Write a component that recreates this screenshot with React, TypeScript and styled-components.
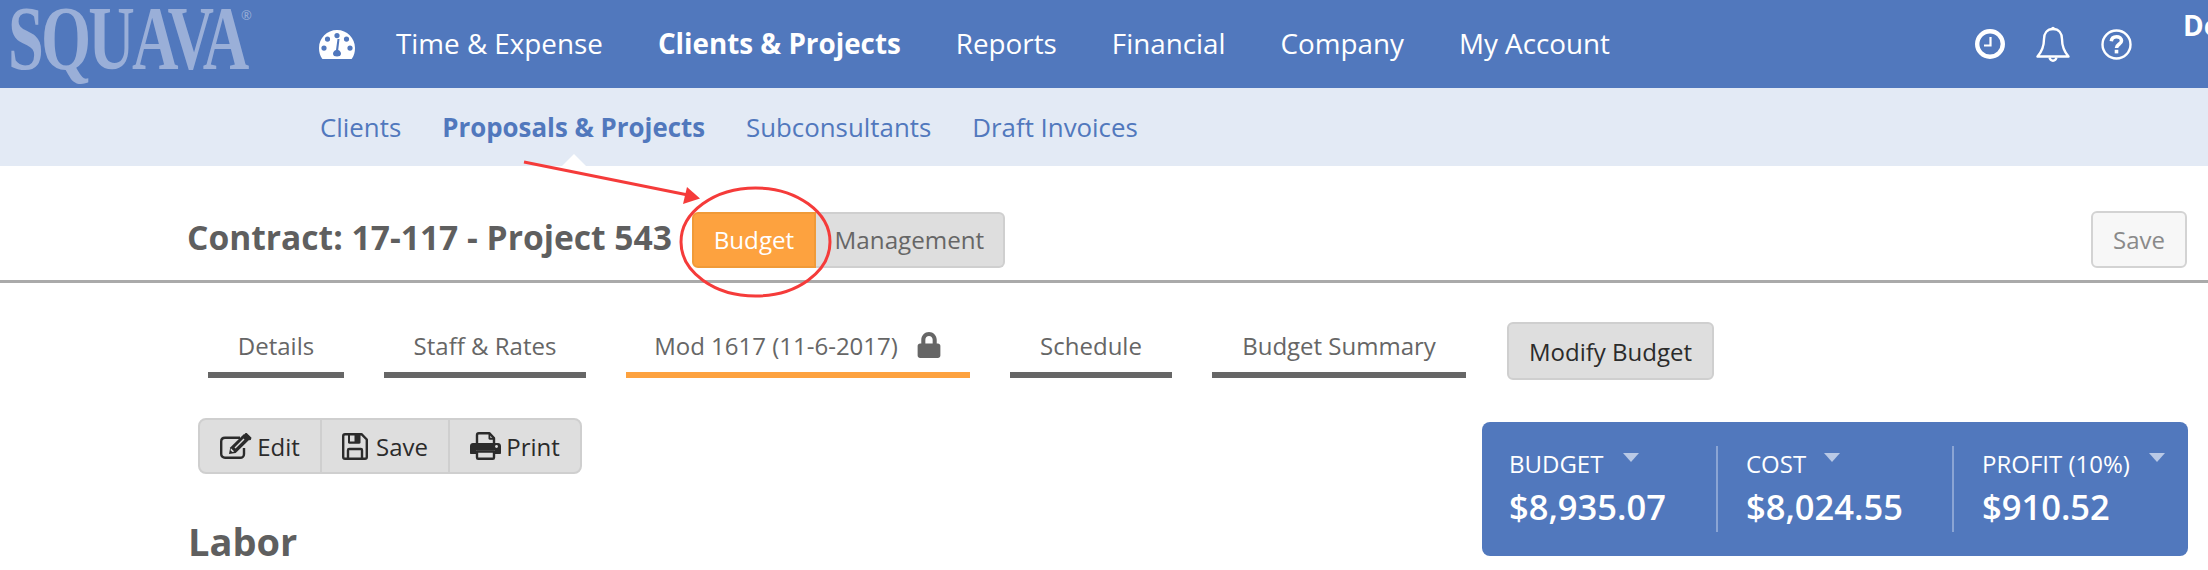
import React from 'react';
import styled, { createGlobalStyle } from 'styled-components';
import { FaLock } from 'react-icons/fa';

const GlobalStyle = createGlobalStyle`
  html, body {
    margin: 0;
    padding: 0;
    background: #fff;
    overflow: hidden;
  }
  body {
    font-family: "Open Sans", "Liberation Sans", sans-serif;
  }
  * {
    box-sizing: border-box;
  }
`;

const mainLinks = [
  { label: 'Time & Expense' },
  { label: 'Clients & Projects', active: true },
  { label: 'Reports' },
  { label: 'Financial' },
  { label: 'Company' },
  { label: 'My Account' },
];

const subLinks = [
  { label: 'Clients' },
  { label: 'Proposals & Projects', active: true },
  { label: 'Subconsultants' },
  { label: 'Draft Invoices' },
];

const tabs = [
  { label: 'Details', width: 136, gap: 40 },
  { label: 'Staff & Rates', width: 202, gap: 40 },
  { label: 'Mod 1617 (11-6-2017)', width: 344, gap: 40, active: true, locked: true },
  { label: 'Schedule', width: 162, gap: 40 },
  { label: 'Budget Summary', width: 254, gap: 41 },
];

const totals = [
  { label: 'BUDGET', value: '$8,935.07', caret: 114, width: 207 },
  { label: 'COST', value: '$8,024.55', caret: 106, width: 236 },
  { label: 'PROFIT (10%)', value: '$910.52', caret: 195, width: 236 },
];

const DashboardIcon = () => (
  <svg width="36" height="29" viewBox="0 0 36 29">
    <path
      fill="#fff"
      fillRule="evenodd"
      d="M18 0C8 0 0 8 0 18c0 4 1 7.500 3 10.500.3.400.7.500 1 .500h28c.4 0 .8-.1 1-.5 2-3 3-6.500 3-10.500C36 8 28 0 18 0zM18 3a2.600 2.600 0 1 1 0 5.200A2.600 2.600 0 0 1 18 3zM8.500 6.500a2.600 2.600 0 1 1 0 5.200 2.600 2.600 0 0 1 0-5.200zM27.500 6.500a2.600 2.600 0 1 1 0 5.200 2.600 2.600 0 0 1 0-5.200zM5 15.500a2.600 2.600 0 1 1 0 5.200 2.600 2.600 0 0 1 0-5.200zM31 15.500a2.600 2.600 0 1 1 0 5.200 2.600 2.600 0 0 1 0-5.200zM20.500 9l-1.300 11c1.600.5 2.800 2 2.800 3.800 0 2.200-1.800 2.700-4 2.700s-4-.5-4-2.700c0-1.900 1.300-3.500 3-3.900L18.500 9z"
    />
  </svg>
);

const ClockIcon = () => (
  <svg width="30" height="30" viewBox="0 0 30 30" fill="none" stroke="#fff">
    <circle cx="15" cy="15" r="12.800" strokeWidth="4.400" />
    <path d="M15.500 8v8.500H9" strokeWidth="2.200" />
  </svg>
);

const BellIcon = () => (
  <svg width="34" height="36" viewBox="0 0 34 36" fill="none" stroke="#fff">
    <path
      strokeWidth="2.400"
      strokeLinejoin="round"
      d="M17 3c-6 0-9 4.500-9 10 0 8-2.500 13-6.500 17.500h31C28.500 26 26 21 26 13c0-5.500-3-10-9-10z"
    />
    <circle cx="17" cy="2.500" r="1.800" fill="#fff" stroke="none" />
    <path strokeWidth="2.400" d="M13.500 31.500c.5 2 1.800 3.200 3.500 3.200s3-1.200 3.500-3.200" />
  </svg>
);

const HelpIcon = () => (
  <svg width="31" height="31" viewBox="0 0 31 31" fill="none" stroke="#fff">
    <circle cx="15.500" cy="15.500" r="14" strokeWidth="2.400" />
    <path strokeWidth="3.600" d="M10.300 12.200c.3-3 2.400-4.500 5.200-4.500 2.900 0 5 1.600 5 4 0 3.600-5 3.600-5 7.300" />
    <path strokeWidth="3.600" d="M15.500 20.800v3.600" />
  </svg>
);

const EditIcon = () => (
  <svg width="32" height="26" viewBox="0 0 32 26" fill="none">
    <path
      stroke="#2b2b2b"
      strokeWidth="2.400"
      d="M24 15v6c0 2-1.500 3.800-3.800 3.800H5c-2.200 0-3.800-1.700-3.800-3.800V8.500C1.200 6.300 2.800 4.700 5 4.700h15"
    />
    <path fill="#2b2b2b" d="M9 21l1.200-6.500L24 1l5.500 5.500L15.700 20z" />
    <path fill="#2b2b2b" d="M25.500 0l1-.2 5 5-.5 1.500-1.200 1.200-5.700-5.700z" />
    <path fill="#dedede" d="M12.300 19l-1.800-1.800.4-2 3.300 3.400zM14.500 14.500l9-9 1 1-9 9z" />
  </svg>
);

const SaveIcon = () => (
  <svg width="26" height="27" viewBox="0 0 26 27" fill="none">
    <path
      stroke="#2b2b2b"
      strokeWidth="2.400"
      strokeLinejoin="round"
      d="M1.200 3c0-1 .8-1.800 1.800-1.800h16.500l5.300 5.300V24c0 1-.8 1.800-1.800 1.800H3c-1 0-1.800-.8-1.800-1.800z"
    />
    <path fill="#2b2b2b" d="M6 1.500h12.500V9.500c0 .7-.5 1.200-1.200 1.200H7.200C6.500 10.700 6 10.200 6 9.500z" />
    <path fill="#dedede" d="M8 2.500h4.500v6H8z" />
    <path stroke="#2b2b2b" strokeWidth="2.400" d="M6 25.500v-8.300c0-.7.500-1.200 1.200-1.200h11.600c.7 0 1.200.5 1.200 1.200v8.300" />
  </svg>
);

const PrintIcon = () => (
  <svg width="31" height="28" viewBox="0 0 31 28" fill="none">
    <path
      stroke="#2b2b2b"
      strokeWidth="2.400"
      strokeLinejoin="round"
      d="M7 12V3c0-1 .8-1.800 1.800-1.800h10.500L24 6v6"
    />
    <path fill="#2b2b2b" d="M18.500 1.500l1.800.3v4h4v2h-4.600c-.7 0-1.200-.5-1.200-1.200z" />
    <path
      fill="#2b2b2b"
      d="M3 11h25c1.700 0 3 1.300 3 3v7c0 .6-.4 1-1 1h-5v-3.500H6V22H1c-.6 0-1-.4-1-1v-7c0-1.700 1.300-3 3-3z"
    />
    <circle cx="26.500" cy="14.500" r="1.400" fill="#dedede" />
    <path
      stroke="#2b2b2b"
      strokeWidth="2.400"
      strokeLinejoin="round"
      d="M7 19.500h17v6c0 .7-.5 1.300-1.200 1.300H8.200c-.7 0-1.200-.6-1.200-1.300z"
    />
  </svg>
);

const Annotation = () => (
  <AnnotationLayer width="2208" height="570" viewBox="0 0 2208 570">
    <path d="M524 162L688 195" stroke="#f53b3a" strokeWidth="3" fill="none" />
    <path d="M700 198.500L683 204L687 187Z" fill="#f53b3a" />
    <ellipse cx="755.500" cy="242" rx="74.500" ry="54" stroke="#f53b3a" strokeWidth="3" fill="none" />
  </AnnotationLayer>
);

const App = () => {
  return (
    <Page>
      <GlobalStyle />
      <Header>
        <Logo>
          <LogoText>SQUAVA</LogoText>
          <LogoMark>®</LogoMark>
        </Logo>
        <DashboardLink>
          <DashboardIcon />
        </DashboardLink>
        <MainNav>
          {mainLinks.map((link) => (
            <MainLink key={link.label} $active={link.active}>
              {link.label}
            </MainLink>
          ))}
        </MainNav>
        <HeaderIcons>
          <ClockIcon />
          <BellIcon />
          <HelpIcon />
        </HeaderIcons>
        <UserName>De</UserName>
      </Header>

      <SubNav>
        {subLinks.map((link) => (
          <SubLink key={link.label} $active={link.active}>
            {link.label}
          </SubLink>
        ))}
      </SubNav>

      <TitleRow>
        <Title>Contract: 17-117 - Project 543</Title>
        <ViewSwitch>
          <BudgetView>Budget</BudgetView>
          <ManagementView>Management</ManagementView>
        </ViewSwitch>
        <SaveButton>Save</SaveButton>
      </TitleRow>

      <TabRow>
        {tabs.map((tab) => (
          <Tab key={tab.label} $width={tab.width} $gap={tab.gap} $active={tab.active}>
            {tab.label}
            {tab.locked && (
              <LockIcon>
                <FaLock size={26} />
              </LockIcon>
            )}
          </Tab>
        ))}
        <ModifyButton>Modify Budget</ModifyButton>
      </TabRow>

      <Content>
        <LeftColumn>
          <Toolbar>
            <ToolButton $width={122} $gap={5}>
              <EditIcon />
              Edit
            </ToolButton>
            <ToolButton $width={128} $gap={8}>
              <SaveIcon />
              Save
            </ToolButton>
            <ToolButton $width={130} $gap={5}>
              <PrintIcon />
              Print
            </ToolButton>
          </Toolbar>
          <SectionTitle>Labor</SectionTitle>
        </LeftColumn>

        <Summary>
          {totals.map((total) => (
            <SummaryCell key={total.label} $width={total.width}>
              <SummaryLabel>{total.label}</SummaryLabel>
              <Caret $left={total.caret} />
              <SummaryValue>{total.value}</SummaryValue>
            </SummaryCell>
          ))}
        </Summary>
      </Content>

      <Annotation />
    </Page>
  );
};

export default App;

const Page = styled.div`
  position: relative;
  width: 2208px;
  height: 570px;
  overflow: hidden;
  background: #fff;
`;

const AnnotationLayer = styled.svg`
  position: absolute;
  top: 0;
  left: 0;
  pointer-events: none;
`;

const Header = styled.header`
  display: flex;
  align-items: center;
  height: 88px;
  background: #5178bd;
  color: #fff;
  overflow: hidden;
`;

const Logo = styled.div`
  position: relative;
  flex: none;
  width: 319px;
  height: 88px;
  padding: 3px 0 0 8px;
`;

const LogoText = styled.div`
  width: 345px;
  font-family: "Liberation Serif", serif;
  font-size: 92px;
  line-height: 70px;
  font-weight: 700;
  color: #9aafd8;
  letter-spacing: -4px;
  transform: scaleX(0.7);
  transform-origin: left top;
`;

const LogoMark = styled.span`
  position: absolute;
  left: 241px;
  top: 6px;
  font-size: 13px;
  line-height: 18px;
  color: #9aafd8;
`;

const DashboardLink = styled.div`
  display: flex;
  flex: none;
  width: 77px;
`;

const MainNav = styled.nav`
  display: flex;
  gap: 55px;
  margin-bottom: 2px;
`;

const MainLink = styled.a<{ $active?: boolean }>`
  font-size: 27.8px;
  line-height: 38px;
  font-weight: ${(p) => (p.$active ? 700 : 400)};
  white-space: nowrap;
`;

const HeaderIcons = styled.div`
  display: flex;
  align-items: center;
  gap: 31px;
  margin-left: auto;
`;

const UserName = styled.div`
  flex: none;
  align-self: flex-start;
  width: 25px;
  margin-left: 51px;
  padding-top: 6px;
  font-size: 28px;
  line-height: 38px;
  font-weight: 700;
  white-space: nowrap;
`;

const SubNav = styled.nav`
  display: flex;
  align-items: center;
  gap: 41px;
  height: 78px;
  padding-left: 320px;
  background: #e3eaf5;
`;

const SubLink = styled.a<{ $active?: boolean }>`
  position: relative;
  font-size: 25.85px;
  line-height: 34px;
  font-weight: ${(p) => (p.$active ? 700 : 400)};
  color: #5178bd;
  white-space: nowrap;

  &::after {
    content: '';
    display: ${(p) => (p.$active ? 'block' : 'none')};
    position: absolute;
    left: 50%;
    bottom: -22px;
    margin-left: -12px;
    border-left: 12px solid transparent;
    border-right: 12px solid transparent;
    border-bottom: 12px solid #fff;
  }
`;

const TitleRow = styled.div`
  display: flex;
  align-items: center;
  height: 117px;
  padding: 46px 21px 13px 187px;
  border-bottom: 3px solid #aaa;
`;

const Title = styled.h1`
  margin: 0 20px 4px 0;
  font-size: 33.6px;
  line-height: 45px;
  font-weight: 700;
  color: #5f5f5f;
  white-space: nowrap;
`;

const ViewSwitch = styled.div`
  display: flex;
  height: 56px;
  font-size: 24.2px;
`;

const BudgetView = styled.div`
  display: flex;
  align-items: center;
  justify-content: center;
  width: 124px;
  border: 2px solid #f09a38;
  border-radius: 6px 0 0 6px;
  background: #fda23f;
  color: #fff;
`;

const ManagementView = styled.div`
  display: flex;
  align-items: center;
  justify-content: center;
  width: 189px;
  border: 2px solid #cfcfcf;
  border-left: 0;
  border-radius: 0 6px 6px 0;
  background: #dedede;
  color: #666;
`;

const SaveButton = styled.div`
  display: flex;
  align-items: center;
  justify-content: center;
  width: 96px;
  height: 57px;
  margin-left: auto;
  border: 2px solid #d3d3d3;
  border-radius: 6px;
  background: #f7f7f7;
  font-size: 24px;
  color: #8a8a8a;
`;

const TabRow = styled.div`
  display: flex;
  align-items: flex-start;
  height: 135px;
  padding: 39px 0 0 208px;
`;

const Tab = styled.div<{ $width: number; $gap: number; $active?: boolean }>`
  display: flex;
  align-items: center;
  justify-content: center;
  flex: none;
  width: ${(p) => p.$width}px;
  height: 56px;
  margin-right: ${(p) => p.$gap}px;
  padding-bottom: 4px;
  border-bottom: 6px solid ${(p) => (p.$active ? '#fda23f' : '#666')};
  font-size: 24px;
  color: #666;
  white-space: nowrap;
`;

const LockIcon = styled.span`
  display: flex;
  margin-left: 18px;
`;

const ModifyButton = styled.div`
  display: flex;
  align-items: center;
  justify-content: center;
  width: 207px;
  height: 58px;
  border: 2px solid #cfcfcf;
  border-radius: 6px;
  background: #dedede;
  font-size: 24px;
  color: #2b2b2b;
`;

const Content = styled.div`
  display: flex;
  justify-content: space-between;
  align-items: flex-start;
  padding: 0 20px 0 188px;
`;

const LeftColumn = styled.div`
  display: flex;
  flex-direction: column;
  align-items: flex-start;
`;

const Toolbar = styled.div`
  display: flex;
  height: 56px;
  margin-left: 10px;
  border: 2px solid #cfcfcf;
  border-radius: 8px;
  background: #dedede;
`;

const ToolButton = styled.div<{ $width: number; $gap: number }>`
  display: flex;
  align-items: center;
  justify-content: center;
  gap: ${(p) => p.$gap}px;
  width: ${(p) => p.$width}px;
  border-right: 2px solid #cfcfcf;
  font-size: 24px;
  color: #2b2b2b;

  &:last-child {
    border-right: 0;
  }
`;

const SectionTitle = styled.h2`
  margin: 41px 0 0;
  font-size: 38px;
  line-height: 52px;
  font-weight: 700;
  color: #5f5f5f;
`;

const Summary = styled.div`
  display: flex;
  width: 706px;
  height: 134px;
  margin-top: 4px;
  padding: 24px 0 0 27px;
  border-radius: 8px;
  background: #5178bd;
  color: #fff;
`;

const SummaryCell = styled.div<{ $width: number }>`
  position: relative;
  flex: none;
  width: ${(p) => p.$width}px;
  height: 86px;

  & + & {
    padding-left: 28px;
    border-left: 2px solid #8ba5d4;
  }
`;

const SummaryLabel = styled.div`
  margin-top: 2px;
  font-size: 24px;
  line-height: 32px;
  white-space: nowrap;
`;

const Caret = styled.span<{ $left: number }>`
  position: absolute;
  top: 7px;
  left: ${(p) => p.$left}px;
  border-left: 8px solid transparent;
  border-right: 8px solid transparent;
  border-top: 9px solid #b9c9e6;
`;

const SummaryValue = styled.div`
  margin-top: 4px;
  font-size: 34.5px;
  line-height: 46px;
  font-weight: 600;
  white-space: nowrap;
`;
